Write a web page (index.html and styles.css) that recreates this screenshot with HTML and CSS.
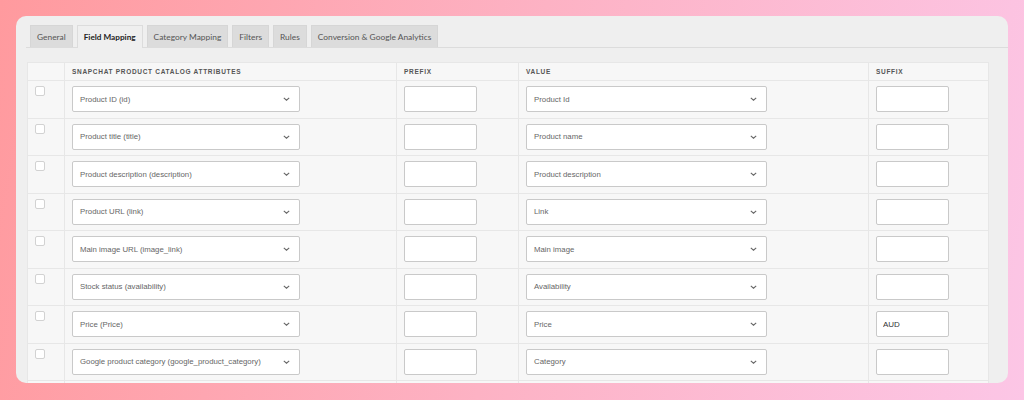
FILE: index.html
```html
<!DOCTYPE html>
<html lang="en">
<head>
    <meta charset="UTF-8">
    <meta name="viewport" content="width=device-width, initial-scale=1.0">
    <title>Snapchat Feed - Field Mapping</title>
    <link rel="stylesheet" href="styles.css">
</head>
<body>
    <div class="panel">
        <!-- Tabs -->
        <div class="tabs">
            <a class="tab" href="#">General</a>
            <a class="tab active" href="#">Field Mapping</a>
            <a class="tab" href="#">Category Mapping</a>
            <a class="tab" href="#">Filters</a>
            <a class="tab" href="#">Rules</a>
            <a class="tab" href="#">Conversion &amp; Google Analytics</a>
        </div>

        <!-- Mapping table -->
        <table class="mapping">
            <colgroup>
                <col class="col-check">
                <col class="col-attr">
                <col class="col-prefix">
                <col class="col-value">
                <col class="col-suffix">
            </colgroup>
            <thead>
                <tr>
                    <th></th>
                    <th>Snapchat product catalog attributes</th>
                    <th>Prefix</th>
                    <th>Value</th>
                    <th>Suffix</th>
                </tr>
            </thead>
            <tbody>
                <tr>
                    <td><input type="checkbox" class="check"></td>
                    <td><div class="select attr"><span>Product ID (id)</span><svg width="7" height="4" viewBox="0 0 7 4"><polyline points="0.8,0.8 3.5,3.2 6.2,0.8"/></svg></div></td>
                    <td><input type="text" class="field"></td>
                    <td><div class="select value"><span>Product Id</span><svg width="7" height="4" viewBox="0 0 7 4"><polyline points="0.8,0.8 3.5,3.2 6.2,0.8"/></svg></div></td>
                    <td><input type="text" class="field"></td>
                </tr>
                <tr>
                    <td><input type="checkbox" class="check"></td>
                    <td><div class="select attr"><span>Product title (title)</span><svg width="7" height="4" viewBox="0 0 7 4"><polyline points="0.8,0.8 3.5,3.2 6.2,0.8"/></svg></div></td>
                    <td><input type="text" class="field"></td>
                    <td><div class="select value"><span>Product name</span><svg width="7" height="4" viewBox="0 0 7 4"><polyline points="0.8,0.8 3.5,3.2 6.2,0.8"/></svg></div></td>
                    <td><input type="text" class="field"></td>
                </tr>
                <tr>
                    <td><input type="checkbox" class="check"></td>
                    <td><div class="select attr"><span>Product description (description)</span><svg width="7" height="4" viewBox="0 0 7 4"><polyline points="0.8,0.8 3.5,3.2 6.2,0.8"/></svg></div></td>
                    <td><input type="text" class="field"></td>
                    <td><div class="select value"><span>Product description</span><svg width="7" height="4" viewBox="0 0 7 4"><polyline points="0.8,0.8 3.5,3.2 6.2,0.8"/></svg></div></td>
                    <td><input type="text" class="field"></td>
                </tr>
                <tr>
                    <td><input type="checkbox" class="check"></td>
                    <td><div class="select attr"><span>Product URL (link)</span><svg width="7" height="4" viewBox="0 0 7 4"><polyline points="0.8,0.8 3.5,3.2 6.2,0.8"/></svg></div></td>
                    <td><input type="text" class="field"></td>
                    <td><div class="select value"><span>Link</span><svg width="7" height="4" viewBox="0 0 7 4"><polyline points="0.8,0.8 3.5,3.2 6.2,0.8"/></svg></div></td>
                    <td><input type="text" class="field"></td>
                </tr>
                <tr>
                    <td><input type="checkbox" class="check"></td>
                    <td><div class="select attr"><span>Main image URL (image_link)</span><svg width="7" height="4" viewBox="0 0 7 4"><polyline points="0.8,0.8 3.5,3.2 6.2,0.8"/></svg></div></td>
                    <td><input type="text" class="field"></td>
                    <td><div class="select value"><span>Main image</span><svg width="7" height="4" viewBox="0 0 7 4"><polyline points="0.8,0.8 3.5,3.2 6.2,0.8"/></svg></div></td>
                    <td><input type="text" class="field"></td>
                </tr>
                <tr>
                    <td><input type="checkbox" class="check"></td>
                    <td><div class="select attr"><span>Stock status (availability)</span><svg width="7" height="4" viewBox="0 0 7 4"><polyline points="0.8,0.8 3.5,3.2 6.2,0.8"/></svg></div></td>
                    <td><input type="text" class="field"></td>
                    <td><div class="select value"><span>Availability</span><svg width="7" height="4" viewBox="0 0 7 4"><polyline points="0.8,0.8 3.5,3.2 6.2,0.8"/></svg></div></td>
                    <td><input type="text" class="field"></td>
                </tr>
                <tr>
                    <td><input type="checkbox" class="check"></td>
                    <td><div class="select attr"><span>Price (Price)</span><svg width="7" height="4" viewBox="0 0 7 4"><polyline points="0.8,0.8 3.5,3.2 6.2,0.8"/></svg></div></td>
                    <td><input type="text" class="field"></td>
                    <td><div class="select value"><span>Price</span><svg width="7" height="4" viewBox="0 0 7 4"><polyline points="0.8,0.8 3.5,3.2 6.2,0.8"/></svg></div></td>
                    <td><input type="text" class="field" value="AUD"></td>
                </tr>
                <tr>
                    <td><input type="checkbox" class="check"></td>
                    <td><div class="select attr"><span>Google product category (google_product_category)</span><svg width="7" height="4" viewBox="0 0 7 4"><polyline points="0.8,0.8 3.5,3.2 6.2,0.8"/></svg></div></td>
                    <td><input type="text" class="field"></td>
                    <td><div class="select value"><span>Category</span><svg width="7" height="4" viewBox="0 0 7 4"><polyline points="0.8,0.8 3.5,3.2 6.2,0.8"/></svg></div></td>
                    <td><input type="text" class="field"></td>
                </tr>
                <tr class="blank">
                    <td></td>
                    <td></td>
                    <td></td>
                    <td></td>
                    <td></td>
                </tr>
            </tbody>
        </table>
    </div>
</body>
</html>
```

FILE: styles.css
```css
/* General Styling */
html, body {
    margin: 0;
    padding: 0;
}

body {
    width: 1024px;
    height: 400px;
    overflow: hidden;
    padding: 16px;
    box-sizing: border-box;
    background: linear-gradient(100deg, #ff9a9e 0%, #fdb2c4 50%, #fcc6e6 100%);
    font-family: "Liberation Sans", Arial, sans-serif;
}

/* Panel */
.panel {
    width: 992px;
    height: 367px;
    box-sizing: border-box;
    padding: 9px 0 0 10px;
    background: #efefef;
    border-radius: 10px;
    overflow: hidden;
}

/* Tabs */
.tabs {
    display: flex;
    gap: 4px;
    padding-left: 4px;
    border-bottom: 1px solid #dcdcdc;
    height: 22px;
}

.tab {
    display: flex;
    align-items: center;
    height: 22px;
    box-sizing: border-box;
    padding: 0 6px;
    background: #dcdcdc;
    border: 1px solid #d6d6d6;
    border-bottom: none;
    color: #555;
    font-family: Lato, sans-serif;
    font-size: 8.4px;
    text-decoration: none;
}

.tab.active {
    height: 23px;
    padding: 0 6px;
    background: #efefef;
    border-color: #dcdcdc;
    color: #222;
    font-weight: 700;
    font-size: 8.2px;
}

/* Mapping table */
.mapping {
    margin: 14px 0 0 1px;
    width: 961px;
    table-layout: fixed;
    border-collapse: collapse;
    background: #f7f7f7;
}

.col-check { width: 37px; }
.col-attr { width: 332px; }
.col-prefix { width: 122px; }
.col-value { width: 350px; }
.col-suffix { width: 120px; }

.mapping th,
.mapping td {
    border: 1px solid #e7e7e7;
    text-align: left;
    vertical-align: top;
    padding: 0 7px;
}

.mapping th {
    height: 17px;
    vertical-align: middle;
    font-size: 6.5px;
    font-weight: 700;
    letter-spacing: 0.7px;
    text-transform: uppercase;
    color: #555;
}

.mapping td {
    height: 37.5px;
    box-sizing: border-box;
    padding-top: 5px;
}

/* Checkbox */
.check {
    appearance: none;
    display: block;
    margin: 0;
    width: 10px;
    height: 10px;
    background: #fff;
    border: 1px solid #d2d2d2;
    border-radius: 2px;
}

/* Fake select boxes */
.select {
    display: flex;
    align-items: center;
    justify-content: space-between;
    height: 26px;
    box-sizing: border-box;
    padding: 0 9px 0 7px;
    background: #fff;
    border: 1px solid #c9c9c9;
    border-radius: 2px;
    font-size: 7.8px;
    color: #666;
}

.select.attr { width: 228px; }
.select.value { width: 241px; }

.select svg polyline {
    fill: none;
    stroke: #666;
    stroke-width: 1.1;
}

/* Text inputs */
.field {
    display: block;
    width: 73px;
    height: 26px;
    box-sizing: border-box;
    margin: 0;
    padding: 0 6px;
    background: #fff;
    border: 1px solid #c9c9c9;
    border-radius: 2px;
    font-family: "Liberation Sans", Arial, sans-serif;
    font-size: 8px;
    color: #333;
}
```
